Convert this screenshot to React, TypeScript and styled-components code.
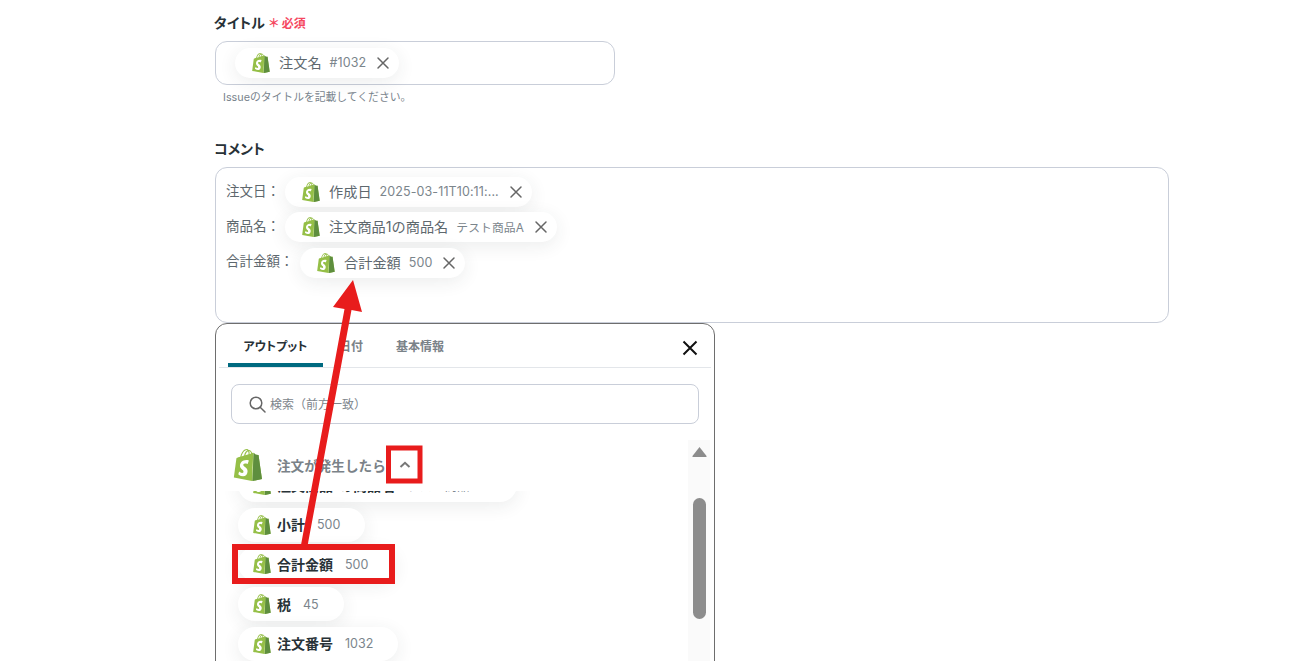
import React from 'react';
import styled, { createGlobalStyle } from 'styled-components';

const GlobalStyle = createGlobalStyle`
  html, body {
    margin: 0;
    padding: 0;
    background: #fff;
    overflow: hidden;
  }
  body {
    font-family: Inter, "Noto Sans CJK JP", sans-serif;
  }
`;

const Page = styled.div`
  position: relative;
  width: 1306px;
  height: 661px;
  overflow: hidden;
  padding: 13px 0 0 215px;
  box-sizing: border-box;
`;

const Label = styled.div`
  display: flex;
  align-items: center;
  height: 18px;
  margin-left: -1px;
  font-size: 14px;
  font-weight: 700;
  font-feature-settings: 'palt';
  color: #283237;
`;

const RequiredMark = styled.span`
  margin-left: 3px;
  font-size: 12px;
  font-feature-settings: normal;
  color: #f5475f;
`;

const Required = styled.span`
  margin-left: 2px;
  font-size: 12px;
  color: #f5475f;
`;

const TitleBox = styled.div`
  width: 400px;
  height: 44px;
  margin-top: 10px;
  padding: 6px 19px;
  box-sizing: border-box;
  border: 1px solid #c9ced9;
  border-radius: 12px;
`;

const Hint = styled.div`
  margin: 5px 0 0 8px;
  height: 15px;
  line-height: 15px;
  font-size: 10.8px;
  color: #78838c;
`;

const CommentLabel = styled(Label)`
  margin-top: 34px;
`;

const CommentBox = styled.div`
  width: 954px;
  height: 156px;
  margin-top: 10px;
  padding: 9px 10px;
  box-sizing: border-box;
  border: 1px solid #c9ced9;
  border-radius: 12px;
  display: flex;
  flex-direction: column;
  gap: 5.4px;
`;

const CommentRow = styled.div`
  display: flex;
  height: 30px;
`;

const RowLabel = styled.span`
  width: ${(p) => p.$width}px;
  padding-top: 4.5px;
  font-size: 13.5px;
  line-height: 18px;
  color: #5e686e;
`;

const ChipBase = styled.div`
  display: inline-flex;
  align-items: center;
  background: #fff;
  border-radius: 18px;
  box-shadow: 0 4px 18px rgba(40, 50, 55, 0.09);
  box-sizing: border-box;
`;

const Chip = styled(ChipBase)`
  height: 30px;
  padding: 0 9px 0 16px;
`;

const ChipName = styled.span`
  margin: 0 0 2px 8px;
  font-size: 14.2px;
  color: #5e686e;
  white-space: nowrap;
`;

const ChipValue = styled.span`
  margin: 0 0 1px 8px;
  font-size: ${(p) => p.$size || 12.5}px;
  letter-spacing: 0.1px;
  color: #7b858c;
  white-space: nowrap;
`;

const RemoveIcon = styled.svg`
  margin-left: 10px;
  width: 14px;
  height: 14px;
  flex: none;
`;

const Popup = styled.div`
  width: 500px;
  height: 400px;
  box-sizing: border-box;
  border: 1px solid #6e6e6e;
  border-radius: 12px;
  background: #fff;
  padding: 0 3px;
`;

const Tabs = styled.div`
  display: flex;
  align-items: stretch;
  height: 43px;
  border-bottom: 1px solid #e3e6ea;
`;

const Tab = styled.div`
  width: ${(p) => p.$width}px;
  display: flex;
  justify-content: center;
  align-items: flex-end;
  padding-bottom: 9px;
  box-sizing: border-box;
  font-size: 12px;
  font-weight: 700;
  font-feature-settings: 'palt';
  color: ${(p) => (p.$active ? '#283237' : '#7a8288')};
  border-bottom: ${(p) => (p.$active ? '4px solid #006a80' : '4px solid transparent')};
  border-radius: 4px 4px 0 0;
  margin-left: ${(p) => p.$offset || 0}px;
  height: 43px;
`;

const CloseButton = styled.svg`
  width: 16px;
  height: 16px;
  margin: 16px 13px 0 auto;
`;

const SearchBox = styled.div`
  display: flex;
  align-items: center;
  height: 40px;
  margin: 16px 12px 0;
  padding-left: 17px;
  box-sizing: border-box;
  border: 1px solid #c9ced9;
  border-radius: 8px;
`;

const SearchText = styled.span`
  margin: 0 0 1px 4px;
  font-size: 12px;
  color: #7d858b;
`;

const Body = styled.div`
  display: flex;
  margin: 16px 1px 0 0;
  height: 240px;
`;

const Content = styled.div`
  flex: 1;
  min-width: 0;
`;

const SectionHead = styled.div`
  display: flex;
  align-items: center;
  height: 51px;
  padding: 0 0 1px 13px;
  box-sizing: border-box;
`;

const SectionTitle = styled.span`
  margin: 0 0 1px 13px;
  font-size: 13.6px;
  font-weight: 700;
  color: #7a8288;
`;

const Chevron = styled.svg`
  margin-left: 12px;
  width: 14px;
  height: 14px;
`;

const OutputList = styled.div`
  height: 190px;
  overflow: hidden;
  padding-left: 19px;
  display: flex;
  flex-direction: column;
  align-items: flex-start;
  gap: 5.7px;
  margin-right: -60px;
`;

const OutputChip = styled(ChipBase)`
  flex: none;
  height: 34px;
  width: ${(p) => p.$width}px;
  padding-left: 14px;
  margin-top: ${(p) => p.$pull || 0}px;
`;

const OutputName = styled.span`
  margin: 0 0 1px 5px;
  font-size: 14px;
  font-weight: 700;
  color: #283237;
  white-space: nowrap;
`;

const OutputValue = styled.span`
  margin-left: 12px;
  font-size: 12.5px;
  color: #7b858c;
  white-space: nowrap;
`;

const ScrollTrack = styled.div`
  flex: none;
  width: 22px;
  background: #fafafa;
  display: flex;
  flex-direction: column;
  align-items: center;
  position: relative;
  z-index: 1;
`;

const ScrollArrow = styled.svg`
  width: 15px;
  height: 11px;
  margin-top: 6px;
`;

const ScrollThumb = styled.div`
  width: 13px;
  height: 121px;
  margin-top: 41px;
  border-radius: 7px;
  background: #8c8c8c;
`;

const Annotation = styled.svg`
  position: absolute;
  left: 0;
  top: 0;
  width: 1306px;
  height: 661px;
  pointer-events: none;
`;

const ShopifyIcon = ({ size = 20 }: { size?: number }) => (
  <svg width={size} height={size} viewBox="0 0 24 24" style={{ flex: 'none' }}>
    <path
      fill="#95BF47"
      d="M15.337 23.979l7.216-1.561s-2.604-17.613-2.625-17.73c-.018-.116-.114-.192-.211-.192s-1.929-.136-1.929-.136-1.275-1.274-1.439-1.411c-.045-.037-.075-.057-.121-.074l-.914 21.104h.023zM11.71 11.305s-.81-.424-1.774-.424c-1.447 0-1.504.906-1.504 1.141 0 1.232 3.24 1.715 3.24 4.629 0 2.295-1.44 3.76-3.406 3.76-2.354 0-3.54-1.465-3.54-1.465l.646-2.086s1.245 1.066 2.28 1.066c.675 0 .975-.545.975-.932 0-1.619-2.654-1.694-2.654-4.359-.034-2.237 1.571-4.416 4.827-4.416 1.257 0 1.875.361 1.875.361l-.945 2.715-.02.01zM11.17.83c.136 0 .271.038.405.135-.984.465-2.064 1.639-2.508 3.992-.656.213-1.293.405-1.889.578C7.697 3.75 8.951.84 11.17.84V.83zm1.235 2.949v.135c-.754.232-1.583.484-2.394.736.466-1.777 1.333-2.645 2.085-2.971.193.501.309 1.176.309 2.1zm.539-2.234c.694.074 1.141.867 1.429 1.755-.349.114-.735.231-1.158.366v-.252c0-.752-.096-1.371-.271-1.871v.002zm2.992 1.289c-.02 0-.06.021-.078.021s-.289.075-.714.21c-.423-1.233-1.176-2.37-2.508-2.37h-.115C12.135.209 11.669 0 11.265 0 8.159 0 6.675 3.877 6.21 5.846c-1.194.365-2.063.636-2.16.674-.675.213-.694.232-.772.87-.075.462-1.83 14.063-1.83 14.063L15.009 24l.927-21.166z"
    />
    <path
      fill="#5E8E3E"
      d="M15.337 23.979l7.216-1.561s-2.604-17.613-2.625-17.73c-.018-.116-.114-.192-.211-.192s-1.929-.136-1.929-.136-1.275-1.274-1.439-1.411c-.045-.037-.075-.057-.121-.074l-.914 21.104h.023z"
    />
  </svg>
);

const Cross = ({ color = '#666' }: { color?: string }) => (
  <path d="M2 2 L12 12 M12 2 L2 12" stroke={color} strokeWidth="1.5" strokeLinecap="round" fill="none" />
);

const TagChip = ({ name, value, valueSize }: { name: string; value: string; valueSize?: number }) => (
  <Chip>
    <ShopifyIcon />
    <ChipName>{name}</ChipName>
    <ChipValue $size={valueSize}>{value}</ChipValue>
    <RemoveIcon viewBox="0 0 14 14">
      <Cross />
    </RemoveIcon>
  </Chip>
);

const App = () => {
  return (
    <Page>
      <GlobalStyle />
      <Label>
        タイトル
        <RequiredMark>＊</RequiredMark>
        <Required>必須</Required>
      </Label>
      <TitleBox>
        <TagChip name="注文名" value="#1032" />
      </TitleBox>
      <Hint>Issueのタイトルを記載してください。</Hint>

      <CommentLabel>コメント</CommentLabel>
      <CommentBox>
        <CommentRow>
          <RowLabel $width={59}>注文日：</RowLabel>
          <TagChip name="作成日" value="2025-03-11T10:11:..." />
        </CommentRow>
        <CommentRow>
          <RowLabel $width={59}>商品名：</RowLabel>
          <TagChip name="注文商品1の商品名" value="テスト商品A" valueSize={11.8} />
        </CommentRow>
        <CommentRow>
          <RowLabel $width={74}>合計金額：</RowLabel>
          <TagChip name="合計金額" value="500" />
        </CommentRow>
      </CommentBox>

      <Popup>
        <Tabs>
          <Tab $width={95} $offset={9} $active>
            アウトプット
          </Tab>
          <Tab $width={40} $offset={8}>
            日付
          </Tab>
          <Tab $width={60} $offset={19}>
            基本情報
          </Tab>
          <CloseButton viewBox="0 0 16 16">
            <path d="M1.5 1.5 L14.5 14.5 M14.5 1.5 L1.5 14.5" stroke="#111" strokeWidth="2" fill="none" />
          </CloseButton>
        </Tabs>
        <SearchBox>
          <svg width="17" height="17" viewBox="0 0 17 17" fill="none" stroke="#666" strokeWidth="1.5">
            <circle cx="7" cy="7" r="5.8" />
            <path d="M11.2 11.2 L16 16" strokeLinecap="round" />
          </svg>
          <SearchText>検索（前方一致）</SearchText>
        </SearchBox>
        <Body>
          <Content>
            <SectionHead>
              <ShopifyIcon size={32} />
              <SectionTitle>注文が発生したら</SectionTitle>
              <Chevron viewBox="0 0 14 14">
                <path d="M2.5 9 L7 4.8 L11.5 9" stroke="#777" strokeWidth="2" fill="none" />
              </Chevron>
            </SectionHead>
            <OutputList>
              <OutputChip $width={279} $pull={-23}>
                <ShopifyIcon />
                <OutputName>注文商品1の商品名</OutputName>
                <OutputValue>テスト商品A</OutputValue>
              </OutputChip>
              <OutputChip $width={127}>
                <ShopifyIcon />
                <OutputName>小計</OutputName>
                <OutputValue>500</OutputValue>
              </OutputChip>
              <OutputChip $width={157}>
                <ShopifyIcon />
                <OutputName>合計金額</OutputName>
                <OutputValue>500</OutputValue>
              </OutputChip>
              <OutputChip $width={106}>
                <ShopifyIcon />
                <OutputName>税</OutputName>
                <OutputValue>45</OutputValue>
              </OutputChip>
              <OutputChip $width={160}>
                <ShopifyIcon />
                <OutputName>注文番号</OutputName>
                <OutputValue>1032</OutputValue>
              </OutputChip>
            </OutputList>
          </Content>
          <ScrollTrack>
            <ScrollArrow viewBox="0 0 15 11">
              <path d="M7.5 1 L14.5 10 Q15 11 14 11 L1 11 Q0 11 .5 10 Z" fill="#8c8c8c" />
            </ScrollArrow>
            <ScrollThumb />
          </ScrollTrack>
        </Body>
      </Popup>

      <Annotation viewBox="0 0 1306 661">
        <rect x="388.5" y="448" width="31.5" height="33" fill="none" stroke="#e81c1c" strokeWidth="5" />
        <rect x="235" y="547" width="157" height="34" fill="none" stroke="#e81c1c" strokeWidth="6" />
        <polygon
          points="301,545 307.5,546 351.5,310 362,312 353,280 333,307 344.5,309"
          fill="#e81c1c"
        />
      </Annotation>
    </Page>
  );
};

export default App;
